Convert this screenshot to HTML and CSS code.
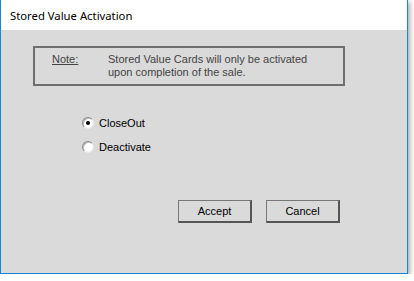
FILE: index.html
```html
<!DOCTYPE html>
<html lang="en">
<head>
  <meta charset="UTF-8" />
  <title>Stored Value Activation</title>
  <link rel="stylesheet" href="styles.css">
</head>
<body>
  <div class="window">
    <div class="titlebar">Stored Value Activation</div>

    <div class="content">
      <div class="note">
        <span class="note-label">Note:</span>
        <p class="note-text">Stored Value Cards will only be activated<br>upon completion of the sale.</p>
      </div>

      <div class="options">
        <label class="option">
          <span class="radio checked"></span>
          <span>CloseOut</span>
        </label>
        <label class="option">
          <span class="radio"></span>
          <span>Deactivate</span>
        </label>
      </div>

      <div class="actions">
        <button class="btn">Accept</button>
        <button class="btn">Cancel</button>
      </div>
    </div>
  </div>
</body>
</html>
```

FILE: styles.css
```css
* {
  box-sizing: border-box;
  margin: 0;
  padding: 0;
}

body {
  background: #ffffff;
  font-family: 'Liberation Sans', Arial, sans-serif;
  font-size: 11px;
  color: #000;
}

.window {
  width: 408px;
  height: 274px;
  display: flex;
  flex-direction: column;
  border: 1px solid #1883d7;
  border-top: none;
  box-shadow: 2px 2px 5px rgba(0, 0, 0, 0.35);
}

.titlebar {
  height: 30px;
  padding: 8px 0 0 9px;
  background: #ffffff;
  font-family: 'Noto Sans', sans-serif;
  font-size: 11.3px;
  line-height: 16px;
}

.content {
  flex: 1;
  background: #dadada;
  padding: 16px 0 0 32px;
}

.note {
  width: 312px;
  height: 40px;
  border: 2px solid #6f6f6f;
  display: flex;
  padding: 5px 0 0 17px;
  line-height: 13px;
  color: #444;
}

.note-label {
  width: 56px;
  text-decoration: underline;
}

.options {
  display: flex;
  flex-direction: column;
  gap: 11px;
  margin: 30px 0 0 49px;
}

.option {
  display: flex;
  align-items: center;
  gap: 5px;
  height: 13px;
}

.radio {
  width: 12px;
  height: 12px;
  border-radius: 50%;
  background: #ffffff;
  border: 1px solid #8a8a8a;
  border-right-color: #e6e6e6;
  border-bottom-color: #e6e6e6;
  box-shadow: inset 1px 1px 0 #bdbdbd;
  display: flex;
  justify-content: center;
  align-items: center;
}

.radio.checked::after {
  content: "";
  width: 4px;
  height: 4px;
  border-radius: 50%;
  background: #000;
}

.actions {
  display: flex;
  gap: 14px;
  margin: 47px 0 0 145px;
}

.btn {
  width: 74px;
  height: 23px;
  background: #dadada;
  border: 1px solid #777;
  border-right: 2px solid #555;
  border-bottom: 2px solid #555;
  font-family: 'Liberation Sans', Arial, sans-serif;
  font-size: 11px;
  color: #000;
}
```
